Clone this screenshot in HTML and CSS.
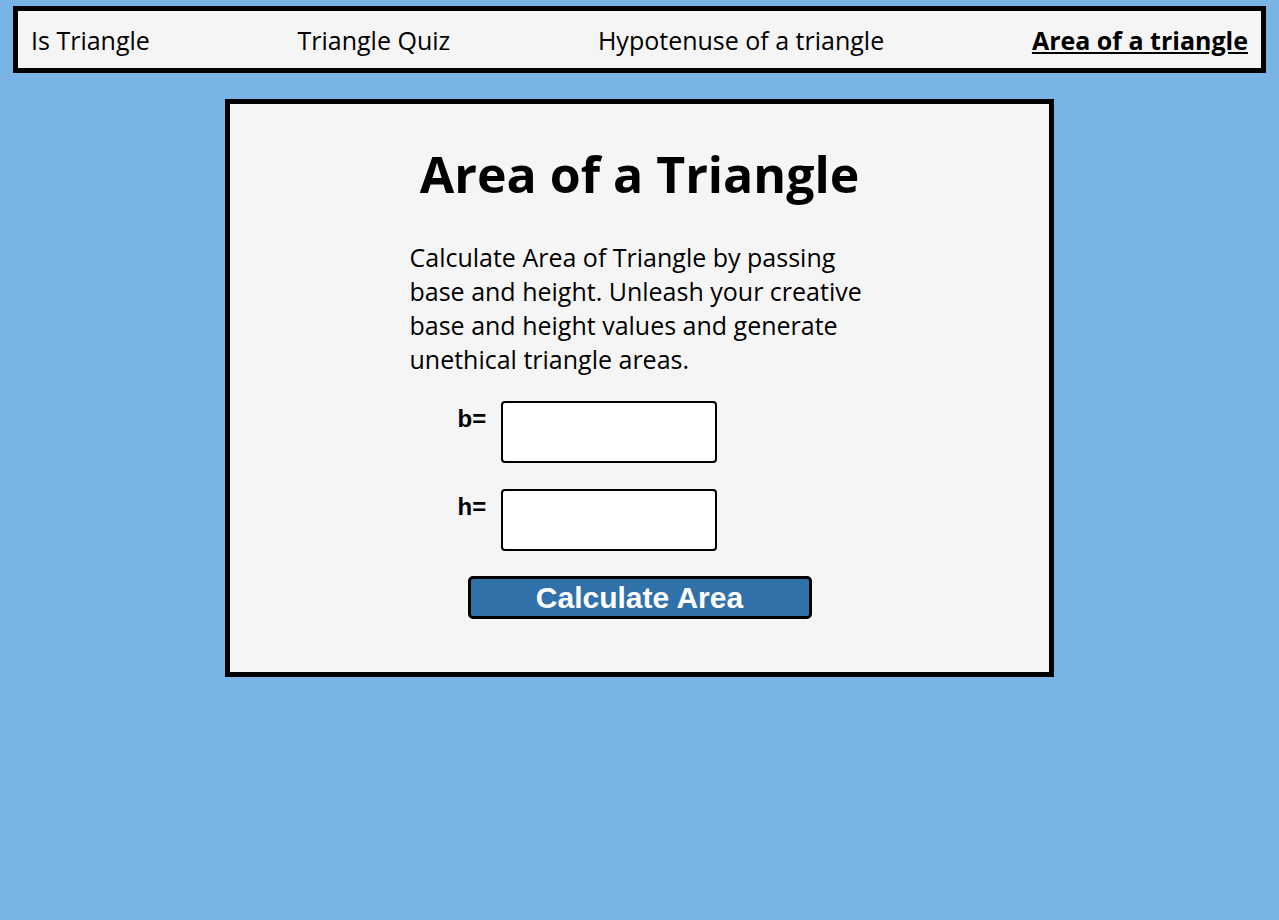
FILE: index.html
```html
<!DOCTYPE html>
<html lang="en">
<head>
<meta charset="utf-8">
<title>Area of a Triangle</title>
<link rel="stylesheet" href="styles.css">
</head>
<body>
<nav class="nav">
  <a class="nav-link" href="#">Is Triangle</a>
  <a class="nav-link" href="#">Triangle Quiz</a>
  <a class="nav-link" href="#">Hypotenuse of a triangle</a>
  <a class="nav-link active" href="#">Area of a triangle</a>
</nav>
<main class="card">
  <h1 class="title">Area of a Triangle</h1>
  <div class="content">
    <p class="desc">Calculate Area of Triangle by passing base and height. Unleash your creative base and height values and generate unethical triangle areas.</p>
    <div class="row">
      <label class="label" for="b">b=</label>
      <input class="field" id="b" type="text">
    </div>
    <div class="row row-last">
      <label class="label" for="h">h=</label>
      <input class="field" id="h" type="text">
    </div>
    <button class="btn" type="button">Calculate Area</button>
  </div>
</main>
</body>
</html>
```
FILE: styles.css
```css
html, body {
  margin: 0;
  padding: 0;
}
body {
  background: #7ab3e6;
  font-family: "Open Sans", "Liberation Sans", sans-serif;
  color: #000;
  height: 920px;
}
.nav {
  margin: 6px 13px 0 13px;
  border: 5px solid #000;
  background: #f5f5f5;
  height: 57px;
  display: flex;
  justify-content: space-between;
  align-items: center;
  padding: 0 13px;
}
.nav-link {
  font-size: 25px;
  color: #000;
  text-decoration: none;
  line-height: 1;
  padding-top: 2px;
}
.nav-link.active {
  font-weight: 700;
  text-decoration: underline;
}
.card {
  width: 819px;
  margin: 26px auto 0;
  border: 5px solid #000;
  background: #f5f5f5;
  padding: 35px 0 53px;
  box-sizing: content-box;
}
.title {
  margin: 0;
  text-align: center;
  font-size: 50px;
  font-weight: 700;
  line-height: 70px;
}
.content {
  width: 460px;
  margin: 0 auto;
}
.desc {
  margin: 31px 0 25px;
  font-size: 25px;
  line-height: 34px;
}
.row {
  display: flex;
  align-items: flex-start;
  gap: 13px;
  padding-left: 48px;
  margin-bottom: 26px;
}
.row-last {
  margin-bottom: 25px;
}
.label {
  font-family: "Liberation Sans", Arial, sans-serif;
  font-weight: 700;
  font-size: 24px;
  line-height: 1;
  padding-top: 6px;
  width: 30px;
}
.field {
  width: 216px;
  height: 62px;
  box-sizing: border-box;
  border: 2px solid #000;
  border-radius: 4px;
  background: #fff;
  margin: 0;
}
.btn {
  display: block;
  margin: 0 0 0 58px;
  width: 344px;
  height: 43px;
  box-sizing: border-box;
  background: #3171aa;
  border: 3px solid #000;
  border-radius: 5px;
  color: #fff;
  font-family: "Liberation Sans", Arial, sans-serif;
  font-weight: 700;
  font-size: 30px;
  line-height: 1;
  padding: 0;
}
```
